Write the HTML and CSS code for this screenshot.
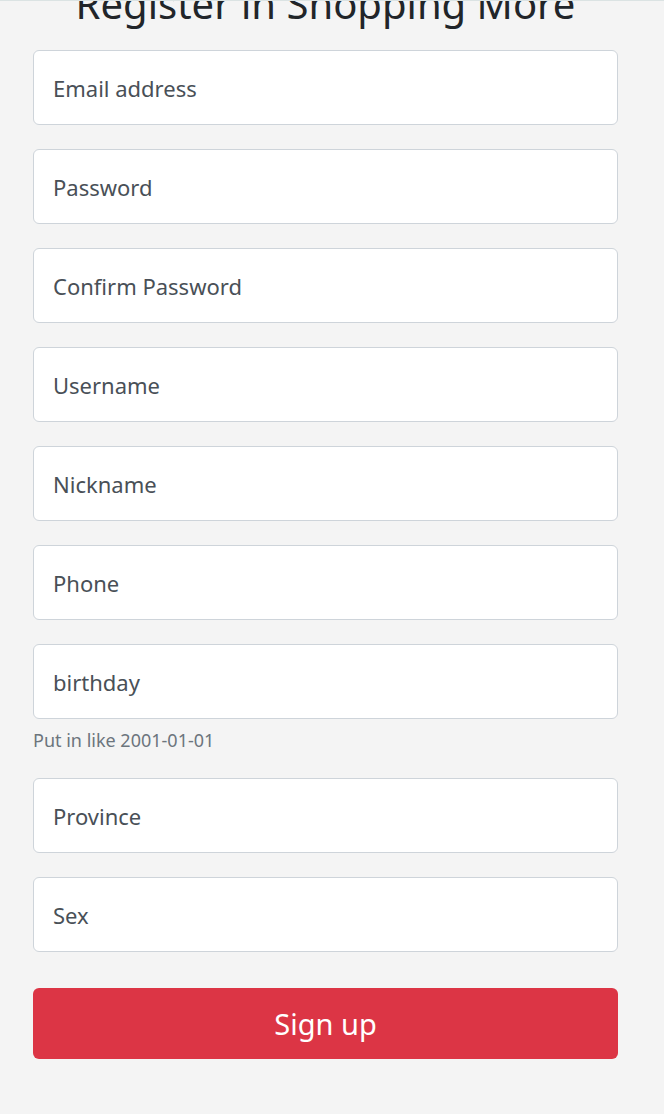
FILE: index.html
```html
<!DOCTYPE html>
<html lang="en">
<head>
<meta charset="utf-8">
<title>Register in Shopping More</title>
<link rel="stylesheet" href="styles.css">
</head>
<body>
<div class="topline"></div>
<main class="page">
  <form class="form">
    <h1 class="title">Register in Shopping More</h1>
    <input class="field" type="email" placeholder="Email address">
    <input class="field" type="password" placeholder="Password">
    <input class="field" type="password" placeholder="Confirm Password">
    <input class="field" type="text" placeholder="Username">
    <input class="field" type="text" placeholder="Nickname">
    <input class="field" type="text" placeholder="Phone">
    <div class="group">
      <input class="field" type="text" placeholder="birthday">
      <small class="help">Put in like 2001-01-01</small>
    </div>
    <input class="field" type="text" placeholder="Province">
    <input class="field" type="text" placeholder="Sex">
    <button class="btn" type="button">Sign up</button>
  </form>
</main>
</body>
</html>
```
FILE: styles.css
```css
html, body {
  margin: 0;
  padding: 0;
  background: #f4f4f4;
  font-family: "Noto Sans", "Open Sans", sans-serif;
}
.topline {
  height: 1px;
  background: #dbe3e3;
  position: relative;
  z-index: 1;
}
.page {
  padding: 0 46px 0 33px;
}
.form {
  display: flex;
  flex-direction: column;
  gap: 24px;
}
.title {
  margin: -21px 0 1px 0;
  height: 45px;
  font-size: 40px;
  line-height: 48px;
  font-weight: 400;
  color: #212529;
  text-align: center;
}
.group {
  display: flex;
  flex-direction: column;
}
.field {
  box-sizing: border-box;
  width: 100%;
  height: 75px;
  margin: 0;
  padding: 0 19px;
  background: #fff;
  border: 1px solid #ced4da;
  border-radius: 6px;
  font-family: inherit;
  font-size: 22px;
  color: #495057;
}
.field::placeholder {
  color: #495057;
  opacity: 1;
}
.help {
  margin-top: 9px;
  margin-bottom: 2px;
  font-size: 18px;
  line-height: 24px;
  color: #6c757d;
}
.btn {
  margin-top: 12px;
  height: 71px;
  border: 0;
  border-radius: 6px;
  background: #dc3545;
  color: #fff;
  font-family: inherit;
  font-size: 29px;
}
```
